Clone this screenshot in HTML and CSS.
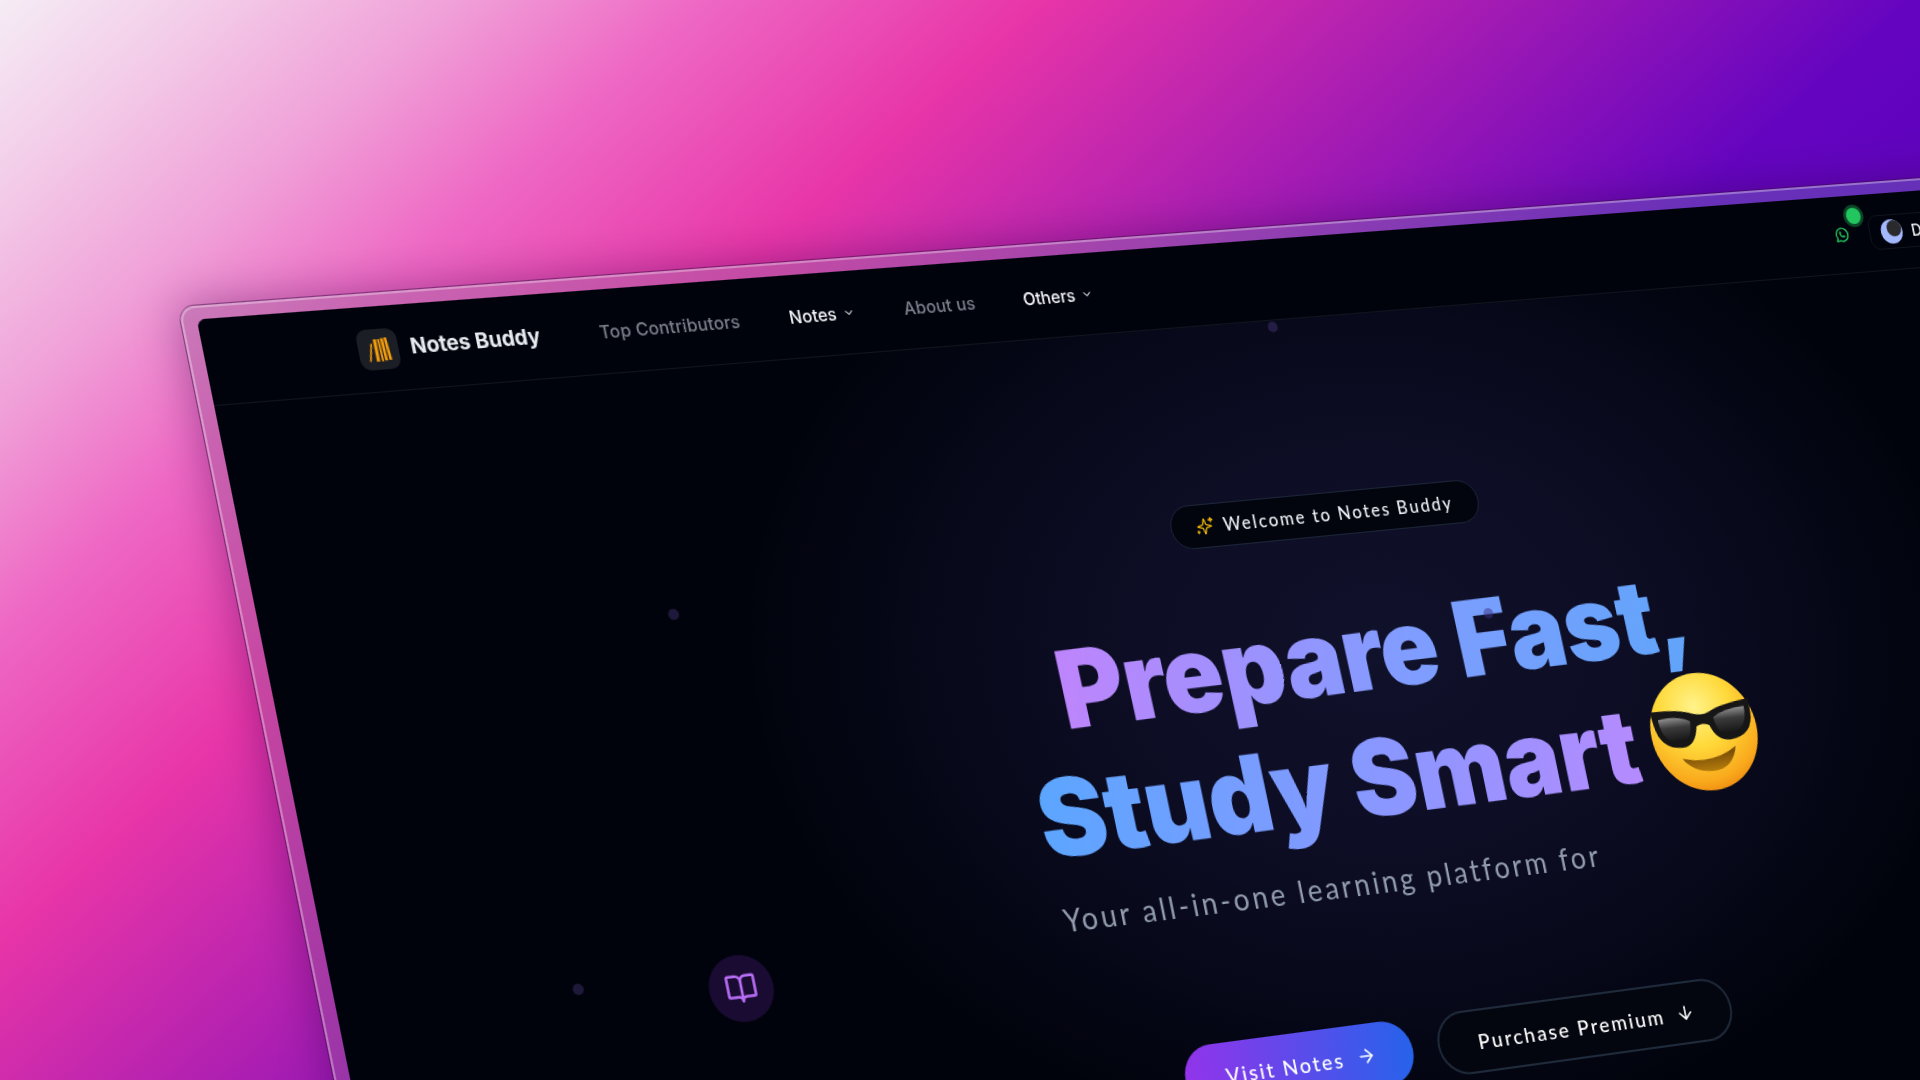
FILE: index.html
```html
<!DOCTYPE html>
<html lang="en">
<head>
<meta charset="utf-8">
<title>Notes Buddy</title>
<link rel="stylesheet" href="styles.css">
</head>
<body>
<div class="device">
  <div class="screen">
    <span class="dot dot-a"></span>
    <span class="dot dot-b"></span>
    <span class="dot dot-c"></span>
    <span class="float-book">
      <svg viewBox="0 0 24 24" width="30" height="30" fill="none" stroke="#b86ef5" stroke-width="2" stroke-linecap="round" stroke-linejoin="round"><path d="M12 7v14"/><path d="M3 18a1 1 0 0 1-1-1V4a1 1 0 0 1 1-1h5a4 4 0 0 1 4 4 4 4 0 0 1 4-4h5a1 1 0 0 1 1 1v13a1 1 0 0 1-1 1h-6a3 3 0 0 0-3 3 3 3 0 0 0-3-3z"/></svg>
    </span>
    <nav class="nav">
      <a class="brand">
        <span class="brand-mark">
          <svg viewBox="0 0 32 32" width="36" height="36" fill="#f59e0b"><polygon points="7.5,25 10.5,11 11.8,11.3 8.8,25.4"/><rect x="13" y="8" width="2.6" height="17.5"/><polygon points="16.4,8 18,8 18.8,25.5 17.2,25.5"/><polygon points="18.8,7.5 21,7.5 22,25 19.8,25"/><polygon points="21.6,7.2 23.8,7.2 25.4,24.8 23.2,24.8"/></svg>
        </span>
        <span class="brand-name">Notes Buddy</span>
      </a>
      <div class="links">
        <a class="link link-muted">Top Contributors</a>
        <a class="link">Notes
          <svg class="chev" viewBox="0 0 24 24" width="12" height="12" fill="none" stroke="currentColor" stroke-width="2" stroke-linecap="round" stroke-linejoin="round"><path d="m6 9 6 6 6-6"/></svg>
        </a>
        <a class="link link-muted">About us</a>
        <a class="link">Others
          <svg class="chev" viewBox="0 0 24 24" width="12" height="12" fill="none" stroke="currentColor" stroke-width="2" stroke-linecap="round" stroke-linejoin="round"><path d="m6 9 6 6 6-6"/></svg>
        </a>
      </div>
      <div class="nav-right">
        <span class="whatsapp">
          <svg viewBox="0 0 24 24" width="17" height="17" fill="none" stroke="#22c55e" stroke-width="2" stroke-linecap="round" stroke-linejoin="round"><path d="M3 21l1.65-3.8a9 9 0 1 1 3.4 2.9L3 21"/><path d="M9 10a.5.5 0 0 0 1 0V9a.5.5 0 0 0-1 0v1a5 5 0 0 0 5 5h1a.5.5 0 0 0 0-1h-1a.5.5 0 0 0 0 1"/></svg>
          <i class="online"></i>
        </span>
        <button class="theme">
          <span class="moon"></span>
          <span>Dark</span>
        </button>
      </div>
    </nav>
    <main class="hero">
      <div class="badge">
        <svg viewBox="0 0 24 24" width="20" height="20" fill="none" stroke="#eab308" stroke-width="2" stroke-linecap="round" stroke-linejoin="round"><path d="M9.9 15.5a2 2 0 0 0-1.4-1.4l-6.1-1.6a.5.5 0 0 1 0-1l6.1-1.6a2 2 0 0 0 1.4-1.4l1.6-6.1a.5.5 0 0 1 1 0l1.6 6.1a2 2 0 0 0 1.4 1.4l6.1 1.6a.5.5 0 0 1 0 1l-6.1 1.6a2 2 0 0 0-1.4 1.4l-1.6 6.1a.5.5 0 0 1-1 0z" transform="translate(2.4 2.4) scale(.8)"/><path d="M20 3v4M22 5h-4M4 17v2M5 18H3"/></svg>
        <span>Welcome to Notes Buddy</span>
      </div>
      <h1 class="title">
        <span class="title-one">Prepare Fast,</span>
        <span class="title-two">Study Smart<svg class="emoji" viewBox="0 0 100 100" width="116" height="116">
          <defs>
            <radialGradient id="face" cx="45%" cy="28%" r="75%"><stop offset="0" stop-color="#fff38a"/><stop offset=".45" stop-color="#ffd93a"/><stop offset=".85" stop-color="#f9a91c"/><stop offset="1" stop-color="#ee8a10"/></radialGradient>
            <linearGradient id="lens" x1="0" y1="0" x2="0" y2="1"><stop offset="0" stop-color="#8f8f8f"/><stop offset=".4" stop-color="#3a3a3a"/><stop offset="1" stop-color="#141414"/></linearGradient>
            <linearGradient id="smile" x1="0" y1="0" x2="0" y2="1"><stop offset="0" stop-color="#6e4406"/><stop offset="1" stop-color="#b57c0c"/></linearGradient>
          </defs>
          <circle cx="50" cy="50" r="49" fill="url(#face)"/>
          <path d="M4 29Q30 29 42 34Q50 37 58 34Q70 29 96 27L96 38Q95 58 73 59Q60 59 56 45Q50 42 44 45Q40 61 28 61Q7 61 5 39Z" fill="#161616"/>
          <path d="M10 36Q28 34 39 40Q38 56 27 56Q10 56 10 36Z" fill="url(#lens)"/>
          <path d="M61 39Q72 33 91 33Q91 53 73 54Q62 54 61 39Z" fill="url(#lens)"/>
          <path d="M25 70Q52 78 76 65Q70 84 50 83Q33 82 25 70Z" fill="url(#smile)"/>
        </svg></span>
      </h1>
      <p class="subtitle">Your all-in-one learning platform for</p>
      <div class="actions">
        <a class="btn btn-primary">Visit Notes
          <svg viewBox="0 0 24 24" width="20" height="20" fill="none" stroke="currentColor" stroke-width="2" stroke-linecap="round" stroke-linejoin="round"><path d="M5 12h14"/><path d="m12 5 7 7-7 7"/></svg>
        </a>
        <a class="btn btn-outline">Purchase Premium
          <svg viewBox="0 0 24 24" width="20" height="20" fill="none" stroke="currentColor" stroke-width="2" stroke-linecap="round" stroke-linejoin="round"><path d="M12 5v14"/><path d="m19 12-7 7-7-7"/></svg>
        </a>
      </div>
    </main>
    <span class="dot dot-d"></span>
  </div>
</div>
</body>
</html>
```

FILE: styles.css
```css
* { box-sizing: border-box; }
html, body { margin: 0; width: 1920px; height: 1080px; overflow: hidden; }
body {
  position: relative;
  background: linear-gradient(138deg, #f5ecf5 0%, #f3cbe8 7%, #f0a0d8 14.7%, #ee68c4 22.5%, #e835a8 33.4%, #a31bb3 48%, #6404c0 61.5%, #4a00b0 100%);
  font-family: "Inter", "Liberation Sans", sans-serif;
}
.device {
  position: absolute;
  left: 0;
  top: 0;
  padding: 12px 12px 12px 14px;
  width: 2120px;
  height: 1024px;
  border-radius: 14px;
  background: linear-gradient(90deg, rgba(150, 90, 150, .42) 0%, rgba(115, 148, 168, .3) 45%);
  box-shadow: 0 0 0 1px rgba(60, 10, 70, .5), inset 0 0 0 2px rgba(255, 255, 255, .32), 0 0 40px rgba(50, 0, 70, .4);
  transform-origin: 0 0;
  transform: matrix3d(1.1525, -.0605, 0, .00007733, .2306, 1.14063, 0, .00000119, 0, 0, 1, 0, 196.7, 319.5, 0, 1) translate(-14px, -12px);
}
.screen {
  position: relative;
  width: 2094px;
  height: 1000px;
  overflow: hidden;
  border-radius: 8px;
  color: #fff;
  background:
    radial-gradient(ellipse 620px 460px at 1047px 390px, #10112a 0%, #0d0e25 40%, #070819 72%, rgba(2, 4, 14, 0) 100%),
    #01030c;
}
.nav {
  display: flex;
  align-items: center;
  height: 76px;
  padding: 0 347px 0 136px;
  border-bottom: 1px solid #12141d;
  background: #01030c;
}
.brand { display: flex; align-items: center; gap: 11px; }
.brand-mark { display: block; width: 36px; height: 36px; border-radius: 9px; background: #1c1e26; }
.brand-mark svg { display: block; }
.brand-name { font-size: 19px; font-weight: 700; letter-spacing: -.1px; color: #e8eaf0; }
.links { display: flex; align-items: center; gap: 47px; margin-left: 55px; }
.link { display: flex; align-items: center; gap: 6px; font-size: 16px; font-weight: 500; color: #f4f5f8; }
.link-muted { color: #7d818c; letter-spacing: .15px; }
.nav-right { display: flex; align-items: center; gap: 22px; margin-left: auto; }
.whatsapp { position: relative; display: block; width: 17px; height: 17px; }
.whatsapp svg { display: block; }
.online {
  position: absolute;
  left: 17px;
  top: -17px;
  width: 16px;
  height: 16px;
  border-radius: 50%;
  background: #22c55e;
  box-shadow: 0 0 0 3px rgba(34, 197, 94, .35);
}
.theme {
  display: flex;
  align-items: center;
  gap: 10px;
  height: 34px;
  padding: 0 12px;
  border: 1px solid #12141d;
  border-radius: 10px;
  background: transparent;
  color: #f4f5f8;
  font: 500 16px "Inter", sans-serif;
}
.moon { position: relative; display: block; width: 24px; height: 24px; border-radius: 50%; background: #a3b8ff; overflow: hidden; }
.moon::after { content: ""; position: absolute; left: 7px; top: 1px; width: 16px; height: 16px; border-radius: 50%; background: #2a2a2d; }
.hero { display: flex; flex-direction: column; align-items: center; padding-top: 164px; }
.badge {
  display: flex;
  align-items: center;
  gap: 9px;
  height: 41px;
  margin-right: 56px;
  padding: 0 26px 0 23px;
  border: 1px solid #1c2638;
  border-radius: 21px;
  background: #02040e;
  font: 500 17px "Lato", sans-serif;
  letter-spacing: 2px;
  color: #eef0f5;
}
.badge svg { flex: none; }
.title {
  margin: 60px 0 0;
  font: 900 99px/115px "Inter", sans-serif;
  letter-spacing: -.5px;
  white-space: nowrap;
  transform-origin: left center;
  transform: rotate(-.6deg);
}
.title-one, .title-two { display: block; width: max-content; margin: 0 auto; }
.title-one {
  background: linear-gradient(100deg, #c084fc 0%, #7f9dff 55%, #60a5fa 100%);
  -webkit-background-clip: text;
  background-clip: text;
  color: transparent;
  padding-bottom: 8px;
  margin-bottom: -8px;
  transform-origin: left center;
  transform: rotate(-.5deg);
}
.title-two {
  position: relative;
  padding-right: 128px;
  background: linear-gradient(100deg, #5aa6ff 0%, #8d96ff 50%, #b88aff 85%);
  -webkit-background-clip: text;
  background-clip: text;
  color: transparent;
}
.emoji { position: absolute; right: -4px; top: -5px; }
.subtitle {
  margin: 17px 184px 0 0;
  font: 400 28px/36px "Lato", sans-serif;
  letter-spacing: 3px;
  color: #929cae;
}
.actions { display: flex; gap: 26px; margin: 111px 0 0 7px; }
.btn {
  display: flex;
  align-items: center;
  gap: 12px;
  height: 60px;
  border-radius: 30px;
  font: 500 20px "Lato", sans-serif;
  letter-spacing: 2.1px;
  color: #fff;
}
.btn-primary { width: 231px; padding-left: 41px; background: linear-gradient(95deg, #9333ea, #2563eb); }
.btn-outline { width: 311px; padding-left: 40px; border: 2px solid #1f2a3a; background: #03050f; }
.dot { position: absolute; width: 10px; height: 10px; border-radius: 50%; background: rgba(120, 90, 200, .25); }
.dot-a { left: 998px; top: 77px; z-index: 2; }
.dot-b { left: 367px; top: 289px; }
.dot-c { left: 212px; top: 609px; }
.dot-d { left: 1159px; top: 363px; background: rgba(60, 50, 130, .5); }
.float-book {
  position: absolute;
  left: 335px;
  top: 601px;
  display: flex;
  align-items: center;
  justify-content: center;
  width: 60px;
  height: 60px;
  border-radius: 50%;
  background: #1a0b33;
}
```
